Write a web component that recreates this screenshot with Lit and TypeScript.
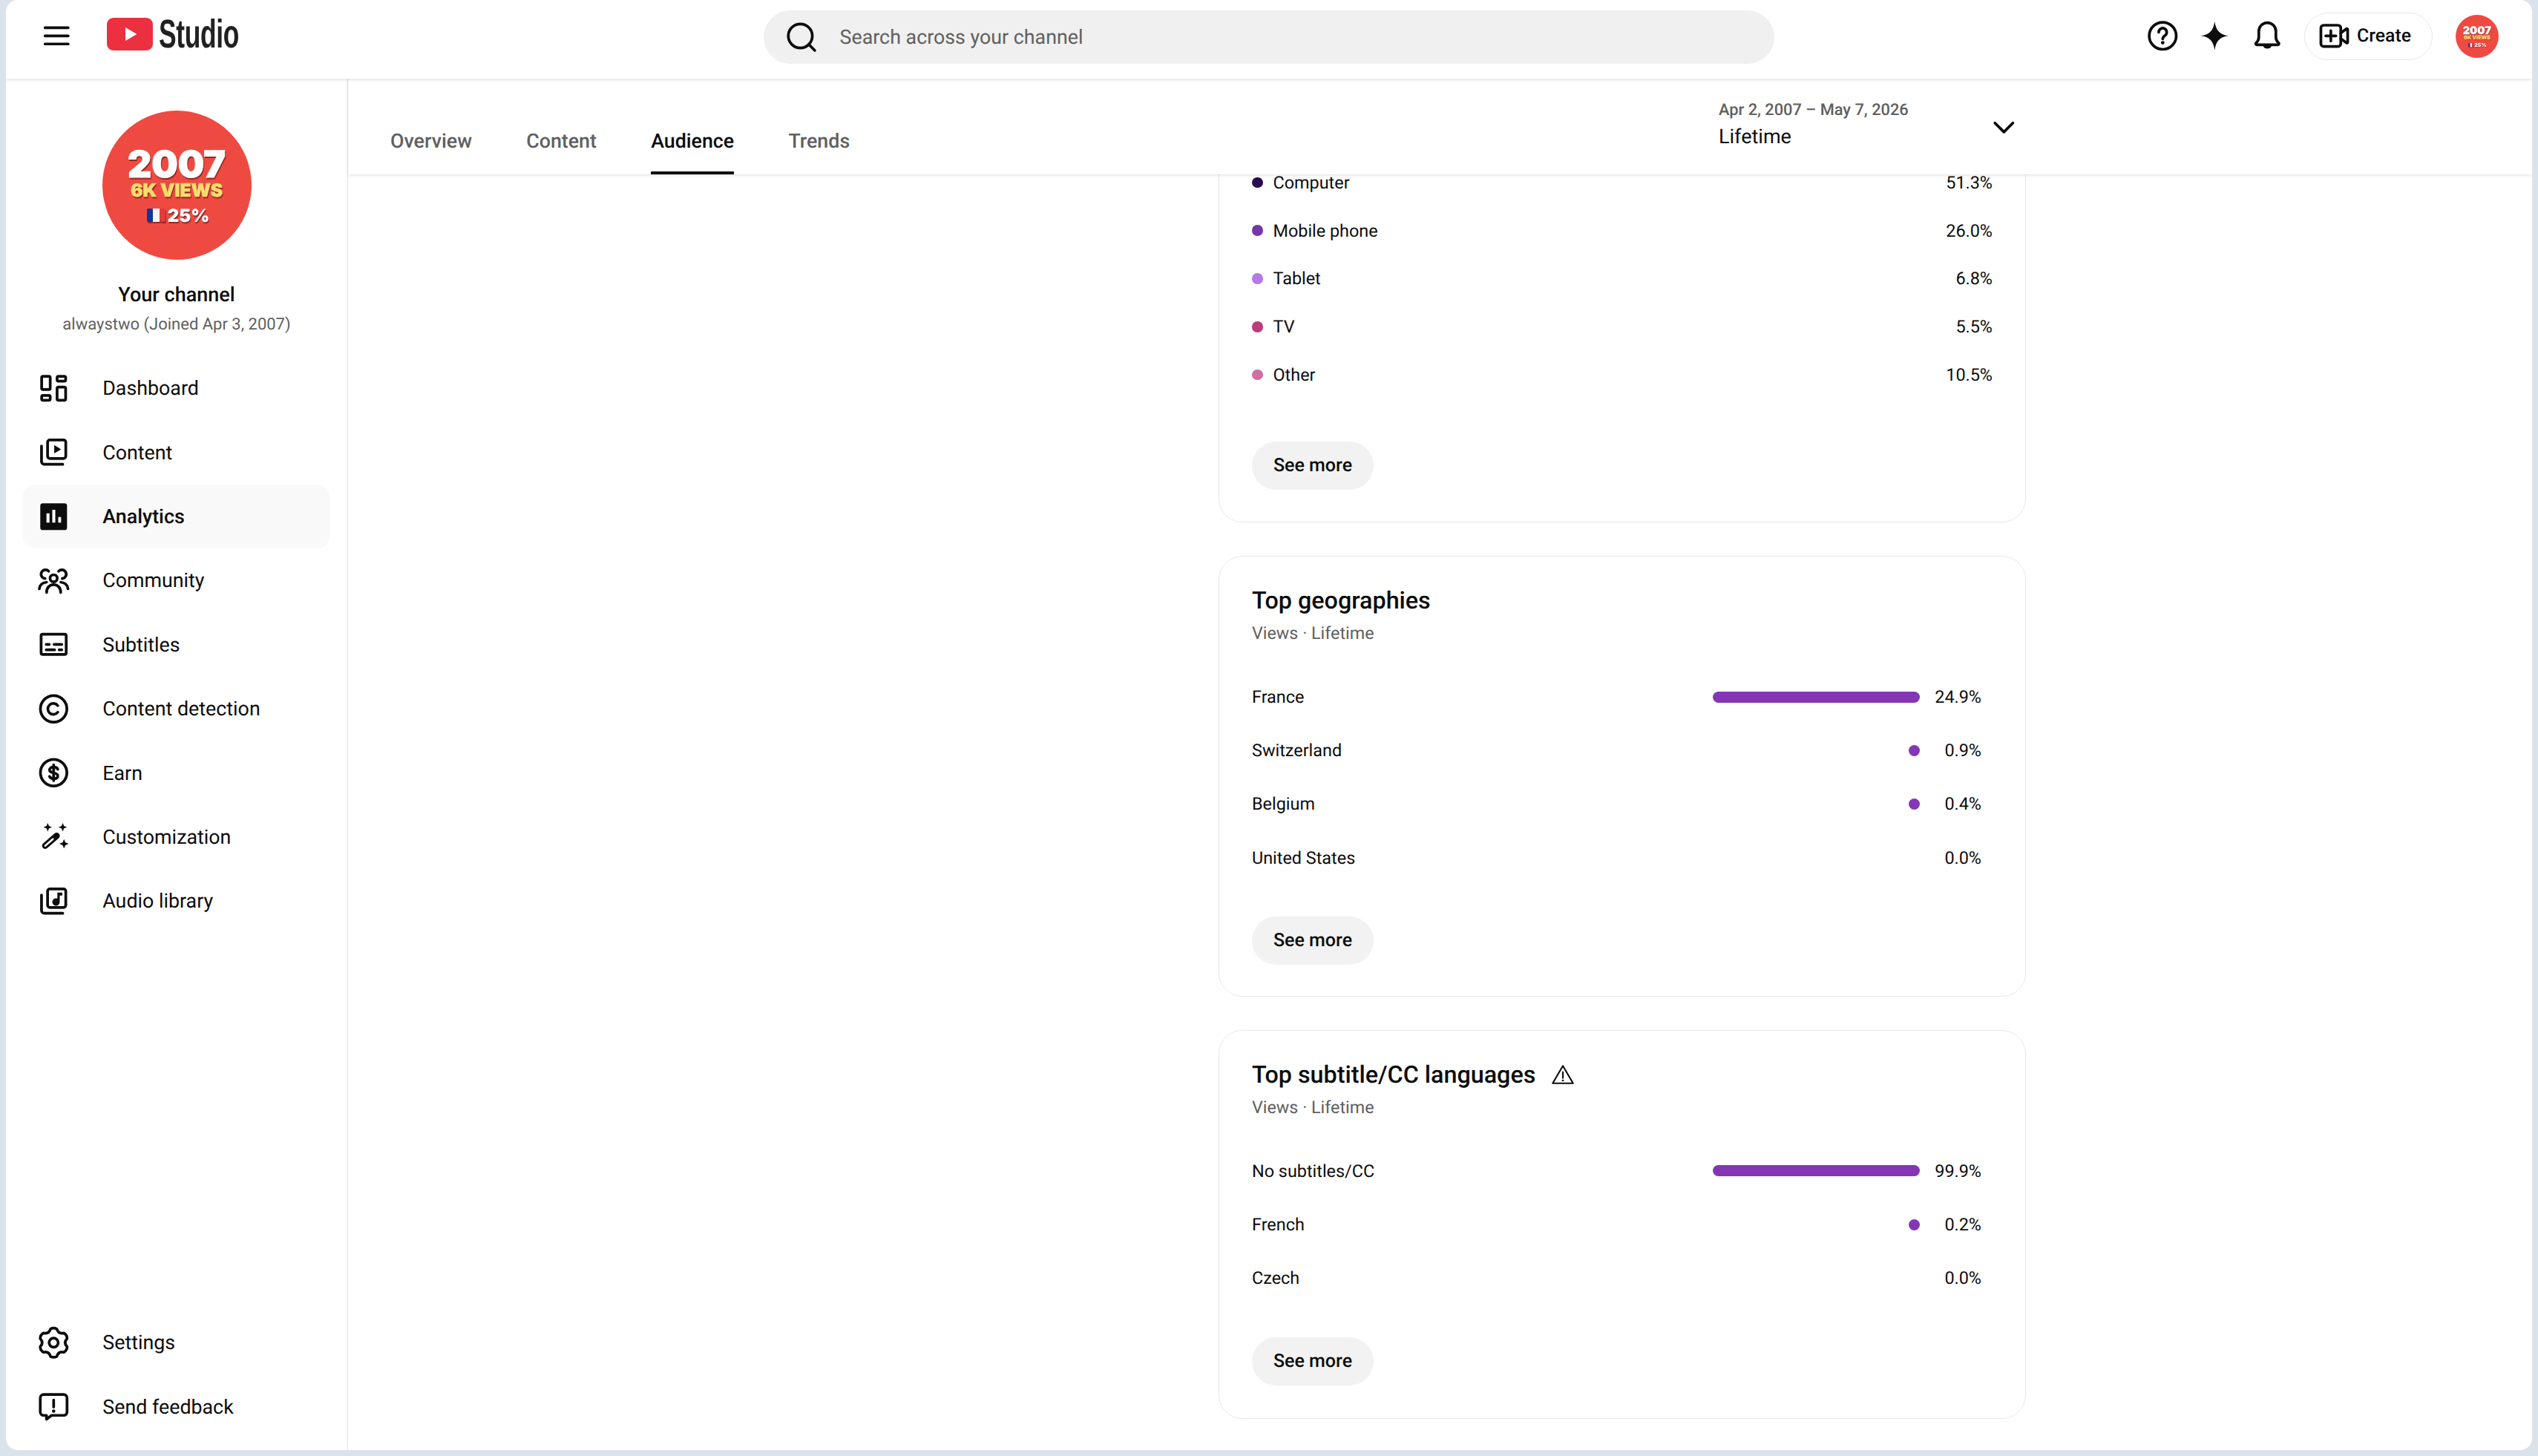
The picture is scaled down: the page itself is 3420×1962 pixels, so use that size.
import { LitElement, css, html } from 'lit'
import { customElement } from 'lit/decorators.js'

// six tooth gear, same outline youtube studio uses for settings
const gearPath = () => {
  const at = (r: number, deg: number) => {
    const a = (deg * Math.PI) / 180
    return `${(12 + r * Math.cos(a)).toFixed(2)} ${(12 + r * Math.sin(a)).toFixed(2)}`
  }
  let d = `M${at(10.2, -103)}`
  for (let i = 0; i < 6; i++) {
    const a = -90 + 60 * i
    d += `Q${at(11.2, a)} ${at(10.2, a + 13)}Q${at(6.9, a + 30)} ${at(10.2, a + 47)}`
  }
  return d + 'Z'
}

@customElement('channel-badge')
export class ChannelBadge extends LitElement {
  static styles = css`
    :host { display: block; }
    svg { display: block; width: 100%; height: 100%; }
    text { font-family: Inter, Roboto, sans-serif; font-weight: 900; text-anchor: middle; }
    .lift { filter: drop-shadow(1.5px 2px 0 rgba(120, 30, 30, 0.75)); }
    .big { stroke: #fff; stroke-width: 1px; }
    .gold { stroke: #f8dc6c; stroke-width: 0.6px; }
  `

  render () {
    return html`
      <svg viewBox="0 0 201 201">
        <circle cx="100.5" cy="100.5" r="100.5" fill="#ee4a42"></circle>
        <g class="lift">
          <text class="big" x="100" y="90" font-size="50" fill="#ffffff">2007</text>
          <text class="gold" x="100" y="116" font-size="24.5" fill="#f8dc6c">6K VIEWS</text>
          <g>
            <rect x="60" y="132" width="8" height="18" rx="2" fill="#16349a"></rect>
            <rect x="68" y="132" width="9" height="18" fill="#f4f4f4"></rect>
            <rect x="77" y="132" width="8" height="18" rx="2" fill="#e03c3c"></rect>
          </g>
          <text x="116" y="150" font-size="24" fill="#ffffff">25%</text>
        </g>
      </svg>
    `
  }
}

const nav = [
  { id: 'dashboard', label: 'Dashboard' },
  { id: 'content', label: 'Content' },
  { id: 'analytics', label: 'Analytics', active: true },
  { id: 'community', label: 'Community' },
  { id: 'subtitles', label: 'Subtitles' },
  { id: 'detection', label: 'Content detection' },
  { id: 'earn', label: 'Earn' },
  { id: 'custom', label: 'Customization' },
  { id: 'audio', label: 'Audio library' }
]

const devices = [
  { label: 'Computer', value: '51.3%', color: '#2a0a4e' },
  { label: 'Mobile phone', value: '26.0%', color: '#7338a8' },
  { label: 'Tablet', value: '6.8%', color: '#b57ae8' },
  { label: 'TV', value: '5.5%', color: '#b93a7d' },
  { label: 'Other', value: '10.5%', color: '#cf6fa3' }
]

const geographies = [
  { label: 'France', pct: 24.9 },
  { label: 'Switzerland', pct: 0.9 },
  { label: 'Belgium', pct: 0.4 },
  { label: 'United States', pct: 0.0 }
]

const languages = [
  { label: 'No subtitles/CC', pct: 99.9 },
  { label: 'French', pct: 0.2 },
  { label: 'Czech', pct: 0.0 }
]

const BAR_MAX = 279
const BAR_MIN = 15

@customElement('app-root')
export class AppRoot extends LitElement {
  static styles = css`
    :host {
      display: block;
      width: 3420px;
      height: 1962px;
      box-sizing: border-box;
      padding: 0 8px 8px;
      background: #dbe3ea;
      font-family: Roboto, sans-serif;
      color: #0d0d0d;
      overflow: hidden;
      text-rendering: geometricPrecision;
    }
    .window {
      height: 100%;
      display: flex;
      flex-direction: column;
      background: #fff;
      border-radius: 16px;
      overflow: hidden;
    }
    .icon {
      display: block;
      flex: none;
      width: 44.6px;
      height: 44.6px;
      fill: none;
      stroke: #0d0d0d;
      stroke-width: 2;
      stroke-linecap: round;
      stroke-linejoin: round;
    }
    .solid { fill: #0d0d0d; stroke: none; }
    .knock { fill: #fff; stroke: none; }

    header {
      position: relative;
      z-index: 3;
      flex: none;
      height: 106px;
      display: flex;
      align-items: center;
      background: #fff;
      box-shadow: 0 1px 5px rgba(0, 0, 0, 0.16);
    }
    .brand {
      flex: none;
      width: 1021px;
      margin-top: -9px;
      display: flex;
      align-items: center;
      padding-left: 45.7px;
      box-sizing: border-box;
    }
    .logo { display: block; width: 62px; height: 44px; margin: -5px 0 0 45.7px; }
    .wordmark {
      margin: -5px 0 0 8px;
      font-family: 'Liberation Sans', sans-serif;
      font-size: 54px;
      line-height: 44px;
      font-weight: 700;
      color: #212121;
      letter-spacing: -0.5px;
      transform: scaleX(0.655);
      transform-origin: left center;
    }
    .search {
      flex: none;
      width: 1362px;
      height: 72px;
      display: flex;
      align-items: center;
      box-sizing: border-box;
      padding-left: 28.5px;
      border-radius: 36px;
      background: #f0f0f0;
      margin-top: -6px;
      font-size: 26.8px;
      color: #606060;
    }
    .search span { margin-left: 29.5px; margin-top: -1px; }
    .actions {
      flex: none;
      margin-left: auto;
      margin-top: -9px;
      padding-right: 45px;
      display: flex;
      align-items: center;
      gap: 26px;
    }
    .create {
      display: flex;
      align-items: center;
      gap: 8px;
      height: 64px;
      box-sizing: border-box;
      margin-left: 2px;
      padding: 0 28px 0 17px;
      border: 1.5px solid #e8e8e8;
      border-radius: 32px;
      font-size: 24.8px;
      font-weight: 500;
    }
    .me { width: 58px; height: 58px; margin-left: 5px; }

    .body { flex: 1; min-height: 0; display: flex; }

    aside {
      flex: none;
      width: 461px;
      box-sizing: border-box;
      display: flex;
      flex-direction: column;
      border-right: 1.5px solid #e5e5e5;
      padding-bottom: 15px;
    }
    .profile {
      display: flex;
      flex-direction: column;
      align-items: center;
      padding-top: 43px;
    }
    .portrait { width: 201px; height: 201px; }
    .channel { margin-top: 28px; font-size: 27px; line-height: 38px; font-weight: 500; }
    .handle { margin-top: 7px; font-size: 22px; line-height: 30px; color: #606060; }
    nav { margin-top: 27px; }
    .foot { margin-top: auto; }
    .item {
      height: 86.4px;
      margin: 0 23px 0 22px;
      padding-left: 19.7px;
      display: flex;
      align-items: center;
      gap: 44px;
      border-radius: 18px;
      font-size: 26.8px;
    }
    .item.active { background: #f9f9f9; font-weight: 500; }

    main { flex: 1; min-width: 0; display: flex; flex-direction: column; }
    .tabs {
      position: relative;
      z-index: 2;
      flex: none;
      height: 129px;
      box-sizing: border-box;
      padding-left: 57px;
      display: flex;
      align-items: flex-end;
      gap: 73.2px;
      background: #fff;
      box-shadow: 0 1px 4px rgba(0, 0, 0, 0.14);
      font-size: 26.8px;
      font-weight: 500;
      color: #606060;
    }
    .tab {
      height: 86px;
      box-sizing: border-box;
      display: flex;
      align-items: center;
      border-bottom: 4px solid transparent;
    }
    .tab.active { color: #0d0d0d; border-bottom-color: #0d0d0d; }
    .range {
      align-self: flex-start;
      margin: 27px 689px 0 auto;
      width: 407px;
      display: flex;
      align-items: center;
      justify-content: space-between;
    }
    .range-when { font-size: 21.8px; line-height: 32px; }
    .range-name { font-size: 27px; line-height: 38px; font-weight: 400; color: #0d0d0d; }
    .range .icon { margin-top: 8px; }

    .scroll {
      flex: 1;
      min-height: 0;
      overflow: hidden;
      padding-left: 1173px;
    }
    .column { width: 1088px; display: flex; flex-direction: column; gap: 45.5px; }
    .card {
      box-sizing: border-box;
      border: 1.5px solid #e8e8e8;
      border-radius: 32px;
      padding: 36.5px 44px 42px;
    }
    .card.clipped { margin-top: -60px; padding-top: 37.5px; padding-bottom: 43px; }
    .card:last-child { padding-bottom: 43.5px; }
    .card:last-child .more { margin-top: 44px; }
    .title {
      display: flex;
      align-items: center;
      gap: 21px;
      font-size: 32.3px;
      line-height: 44px;
      font-weight: 500;
    }
    .title .icon { width: 32px; height: 32px; stroke-width: 1.6; }
    .sub { margin-top: 5.5px; font-size: 23.3px; line-height: 34px; color: #606060; }
    .rows { margin-top: 32.5px; }
    .row { height: 72.2px; display: flex; align-items: center; font-size: 23.4px; }
    .row .name { flex: 1; }
    .track { flex: none; display: flex; justify-content: flex-end; width: 279px; }
    .bar { height: 15px; border-radius: 8px; background: #8436b4; }
    .pct { flex: none; width: 83px; margin-right: 15px; text-align: right; }
    .legend { height: 64.8px; display: flex; align-items: center; font-size: 23.4px; }
    .swatch { flex: none; width: 14.5px; height: 14.5px; border-radius: 50%; margin-right: 14px; }
    .legend .name { flex: 1; }
    .more {
      display: flex;
      align-items: center;
      justify-content: center;
      width: 164px;
      height: 65px;
      margin-top: 43px;
      border-radius: 33px;
      background: #f2f2f2;
      font-size: 25px;
      font-weight: 500;
    }
    .legends + .more { margin-top: 57.5px; }
  `

  private glyph (id: string) {
    switch (id) {
      case 'dashboard':
        return html`<svg class="icon" viewBox="0 0 24 24"><rect x="3.3" y="3.3" width="6.2" height="9.6" rx="1"/><rect x="14.5" y="3.3" width="6.2" height="3.5" rx="1"/><rect x="3.3" y="17.2" width="6.2" height="3.5" rx="1"/><rect x="14.5" y="11.1" width="6.2" height="9.6" rx="1"/></svg>`
      case 'content':
        return html`<svg class="icon" viewBox="0 0 24 24"><rect x="7.6" y="3.2" width="13.2" height="13.4" rx="1.6"/><path d="M3.2 7.6v11.2a2 2 0 0 0 2 2h13.4"/><path class="solid" d="M12.4 6.9v6l5-3z"/></svg>`
      case 'analytics':
        return html`<svg class="icon" viewBox="0 0 24 24"><rect class="solid" x="2.3" y="2.3" width="19.4" height="19.4" rx="1.8"/><path class="knock" d="M6.8 9.6H9v6.7H6.8zM11 7h2.2v9.3H11zM15.3 12.3h2.1v4h-2.1z"/></svg>`
      case 'community':
        return html`<svg class="icon" viewBox="0 0 24 24"><circle cx="12" cy="10.4" r="2.6"/><path d="M6.9 20.6c0-3.5 2.2-5.6 5.1-5.6s5.1 2.1 5.1 5.6"/><path d="M8.4 5.2A3.2 3.2 0 1 0 5.8 10.6"/><path d="M1.6 18c.3-2.6 2.2-4.4 5.2-4.8"/><path d="M15.6 5.2A3.2 3.2 0 1 1 18.2 10.6"/><path d="M22.4 18c-.3-2.6-2.2-4.4-5.2-4.8"/></svg>`
      case 'subtitles':
        return html`<svg class="icon" viewBox="0 0 24 24"><rect x="2.9" y="4.7" width="18.2" height="14.6" rx="1.2"/><path d="M6.6 12h2.2M12.3 12h5.6M6.6 16h6.1M16 16h1.9"/></svg>`
      case 'detection':
        return html`<svg class="icon" viewBox="0 0 24 24"><circle cx="12" cy="12" r="9.6"/><path d="M15 9.6a4 4 0 1 0 0 4.8"/></svg>`
      case 'earn':
        return html`<svg class="icon" viewBox="0 0 24 24"><circle cx="12" cy="12" r="9.6"/><path d="M15 9.5c-.4-1-1.5-1.6-3-1.6-1.8 0-3 .9-3 2.1 0 1.4 1.2 1.7 3 2.1s3 .8 3 2.1c0 1.3-1.2 2.1-3 2.1-1.5 0-2.6-.6-3-1.6M12 6.3v11.4"/></svg>`
      case 'custom':
        return html`<svg class="icon" viewBox="0 0 24 24"><path stroke-width="4.6" d="M5.9 18.1 14.2 10.9"/><path stroke="#fff" stroke-width="1.4" d="M5.9 18.1 11.4 13.3"/><path class="solid" d="M7.7 1.55l.9 2.2 2.2.9-2.2.9-.9 2.2-.9-2.2-2.2-.9 2.2-.9zM18.6 1.55l.9 2.2 2.2.9-2.2.9-.9 2.2-.9-2.2-2.2-.9 2.2-.9zM19.5 13.3l1 2.4 2.4 1-2.4 1-1 2.4-1-2.4-2.4-1 2.4-1z"/></svg>`
      case 'audio':
        return html`<svg class="icon" viewBox="0 0 24 24"><rect x="7.6" y="3.2" width="13.2" height="13.4" rx="1.6"/><path d="M3.2 7.6v11.2a2 2 0 0 0 2 2h13.4"/><path class="solid" d="M14.7 5.8h3.6v2.1h-1.9v4.7a2.7 2.7 0 1 1-1.7-2.5z"/></svg>`
      case 'settings':
        return html`<svg class="icon" viewBox="0 0 24 24"><path d=${gearPath()}/><circle cx="12" cy="12" r="3.3"/></svg>`
      case 'feedback':
        return html`<svg class="icon" viewBox="0 0 24 24"><path d="M4.7 2.8h14.6a2.4 2.4 0 0 1 2.4 2.4v10.3a2.4 2.4 0 0 1-2.4 2.4h-8.8l-3.7 2.8v-2.8H4.7a2.4 2.4 0 0 1-2.4-2.4V5.2a2.4 2.4 0 0 1 2.4-2.4z"/><path d="M12 6.8v5"/><circle class="solid" cx="12" cy="14.8" r="1.2"/></svg>`
    }
    return null
  }

  private renderNavItem (item: { id: string, label: string, active?: boolean }) {
    return html`<div class="item ${item.active ? 'active' : ''}">${this.glyph(item.id)}<span>${item.label}</span></div>`
  }

  private renderPctRows (rows: { label: string, pct: number }[]) {
    const max = Math.max(...rows.map(r => r.pct))
    return html`
      <div class="rows">
        ${rows.map(r => {
          const width = r.pct === 0 ? 0 : Math.max(BAR_MIN, (r.pct / max) * BAR_MAX)
          return html`
            <div class="row">
              <span class="name">${r.label}</span>
              <div class="track"><div class="bar" style="width:${width}px"></div></div>
              <span class="pct">${r.pct.toFixed(1)}%</span>
            </div>
          `
        })}
      </div>
      <div class="more">See more</div>
    `
  }

  render () {
    return html`
      <div class="window">
        <header>
          <div class="brand">
            <svg class="icon" viewBox="0 0 24 24"><path d="M3.6 6.1h16.8M3.6 12h16.8M3.6 17.9h16.8"/></svg>
            <svg class="logo" viewBox="0 0 62 44"><path fill="#ec3040" d="M9 0h44c5 0 9 4 9 9v26c0 5-4 9-9 9H9c-5 0-9-4-9-9V9c0-5 4-9 9-9z"/><path fill="#fff" d="M25 13v18l15.5-9z"/></svg>
            <span class="wordmark">Studio</span>
          </div>
          <div class="search">
            <svg class="icon" viewBox="0 0 24 24"><circle cx="11" cy="11" r="8.7"/><path d="m17.3 17.3 4.2 4.2"/></svg>
            <span>Search across your channel</span>
          </div>
          <div class="actions">
            <svg class="icon" viewBox="0 0 24 24"><circle cx="12" cy="12" r="9.8"/><path d="M9.1 9.4a2.9 2.9 0 1 1 4.5 2.4c-1 .7-1.6 1.2-1.6 2.4"/><circle class="solid" cx="12" cy="17" r="1.3"/></svg>
            <svg class="icon" viewBox="0 0 24 24"><path class="solid" d="M12 1.5c.9 6.4 3.4 9.6 10 10.5-6.6.9-9.1 4.1-10 10.5-.9-6.4-3.4-9.6-10-10.5 6.6-.9 9.1-4.1 10-10.5z"/></svg>
            <svg class="icon" viewBox="0 0 24 24"><path d="M12 2.5a6.2 6.2 0 0 0-6.2 6.2v4.5c0 2-1.1 3.1-2 4a.8.8 0 0 0 .6 1.3h15.2a.8.8 0 0 0 .6-1.3c-.9-.9-2-2-2-4V8.7A6.2 6.2 0 0 0 12 2.5z"/><path d="M9.7 18.6a2.4 2.4 0 0 0 4.6 0"/></svg>
            <div class="create">
              <svg class="icon" viewBox="0 0 24 24"><rect x="2.4" y="4.3" width="14.4" height="15.4" rx="2"/><path d="M9.6 8.3v7.4M5.9 12h7.4"/><path d="m16.8 10 4-3c.6-.4 1-.1 1 .5v9c0 .6-.4.9-1 .5l-4-3"/></svg>
              <span>Create</span>
            </div>
            <channel-badge class="me"></channel-badge>
          </div>
        </header>
        <div class="body">
          <aside>
            <div class="profile">
              <channel-badge class="portrait"></channel-badge>
              <div class="channel">Your channel</div>
              <div class="handle">alwaystwo (Joined Apr 3, 2007)</div>
            </div>
            <nav>${nav.map(item => this.renderNavItem(item))}</nav>
            <div class="foot">
              ${this.renderNavItem({ id: 'settings', label: 'Settings' })}
              ${this.renderNavItem({ id: 'feedback', label: 'Send feedback' })}
            </div>
          </aside>
          <main>
            <div class="tabs">
              <div class="tab">Overview</div>
              <div class="tab">Content</div>
              <div class="tab active">Audience</div>
              <div class="tab">Trends</div>
              <div class="range">
                <div>
                  <div class="range-when">Apr 2, 2007 – May 7, 2026</div>
                  <div class="range-name">Lifetime</div>
                </div>
                <svg class="icon" viewBox="0 0 24 24"><path d="m5.5 8.5 6.5 6.5 6.5-6.5"/></svg>
              </div>
            </div>
            <div class="scroll">
              <div class="column">
                <section class="card clipped">
                  <div class="legends">
                    ${devices.map(d => html`
                      <div class="legend">
                        <span class="swatch" style="background:${d.color}"></span>
                        <span class="name">${d.label}</span>
                        <span>${d.value}</span>
                      </div>
                    `)}
                  </div>
                  <div class="more">See more</div>
                </section>
                <section class="card">
                  <div class="title">Top geographies</div>
                  <div class="sub">Views · Lifetime</div>
                  ${this.renderPctRows(geographies)}
                </section>
                <section class="card">
                  <div class="title">
                    <span>Top subtitle/CC languages</span>
                    <svg class="icon" viewBox="0 0 24 24"><path d="M12 3.2 22.3 20.8H1.7z"/><path d="M12 9.5v6"/><circle class="solid" cx="12" cy="18" r="1"/></svg>
                  </div>
                  <div class="sub">Views · Lifetime</div>
                  ${this.renderPctRows(languages)}
                </section>
              </div>
            </div>
          </main>
        </div>
      </div>
    `
  }
}
